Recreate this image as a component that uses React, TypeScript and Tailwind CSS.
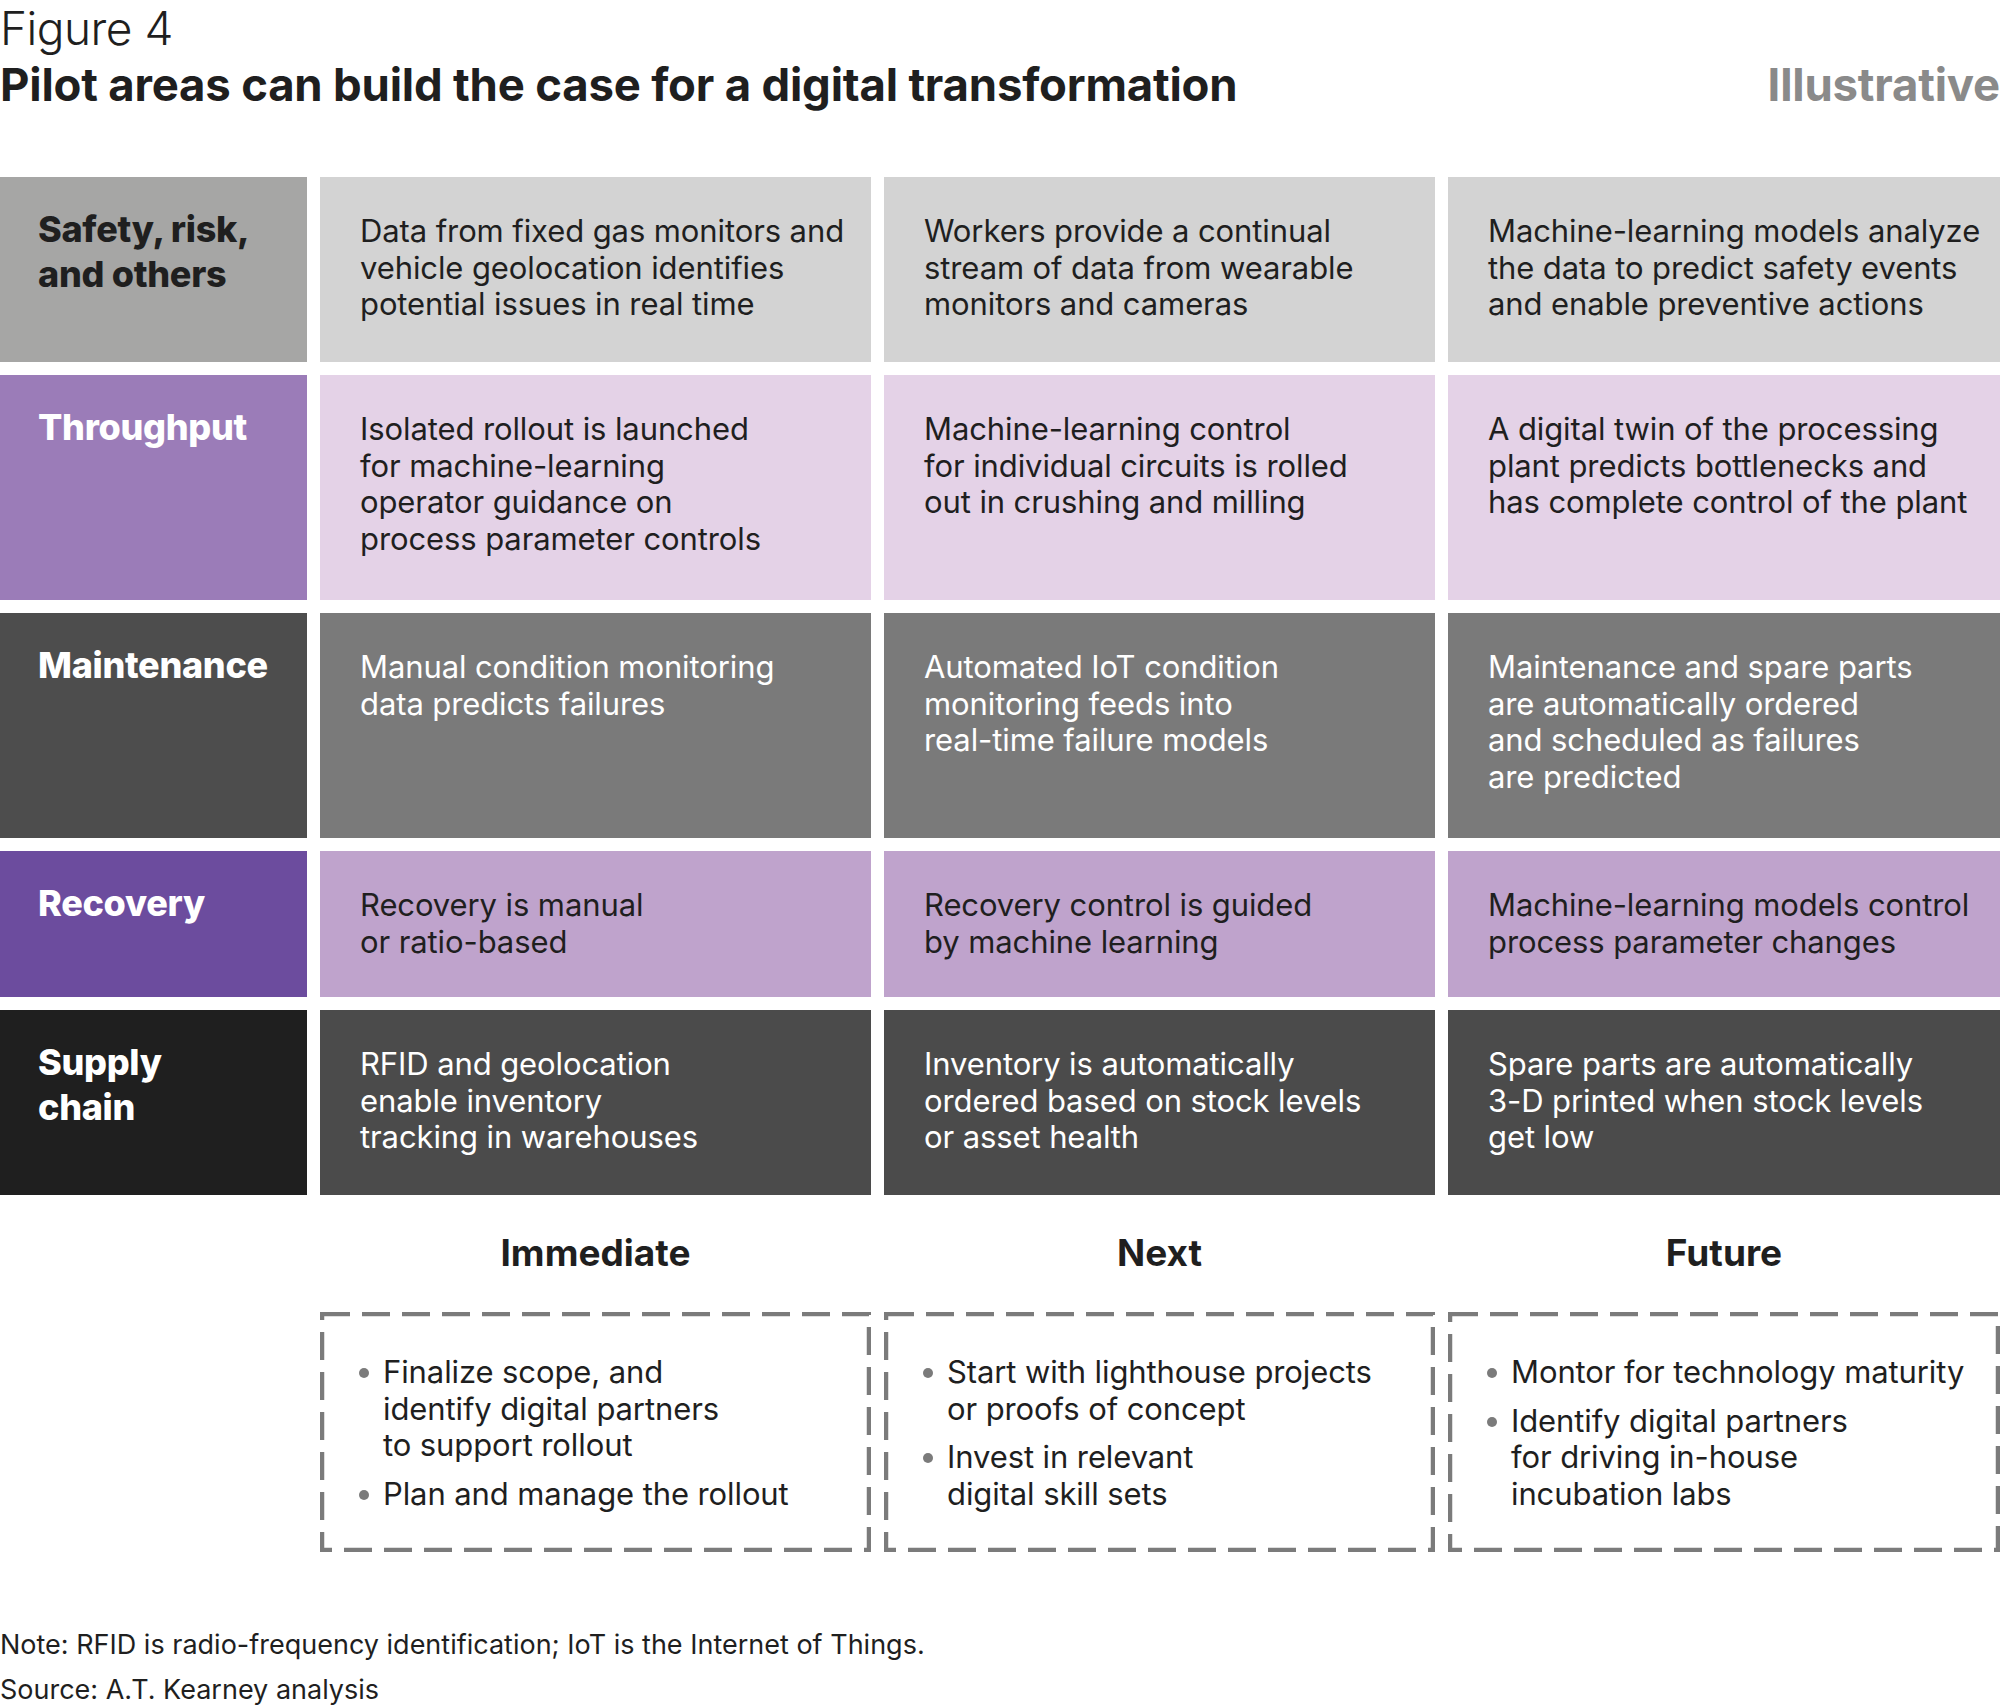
import React from 'react';

type Row = {
  label: string[];
  labelBg: string;
  labelText: string;
  cellBg: string;
  cellText: string;
  height: string;
  cells: string[][];
};

const rows: Row[] = [
  {
    label: ['Safety, risk,', 'and others'],
    labelBg: 'bg-[#a6a6a5]',
    labelText: 'text-[#1f1f1f]',
    cellBg: 'bg-[#d3d3d3]',
    cellText: 'text-[#1f1f1f]',
    height: 'h-[185px]',
    cells: [
      ['Data from fixed gas monitors and', 'vehicle geolocation identifies', 'potential issues in real time'],
      ['Workers provide a continual', 'stream of data from wearable', 'monitors and cameras'],
      ['Machine-learning models analyze', 'the data to predict safety events', 'and enable preventive actions'],
    ],
  },
  {
    label: ['Throughput'],
    labelBg: 'bg-[#9b7cb8]',
    labelText: 'text-white',
    cellBg: 'bg-[#e4d2e7]',
    cellText: 'text-[#1f1f1f]',
    height: 'h-[225px]',
    cells: [
      ['Isolated rollout is launched', 'for machine-learning', 'operator guidance on', 'process parameter controls'],
      ['Machine-learning control', 'for individual circuits is rolled', 'out in crushing and milling'],
      ['A digital twin of the processing', 'plant predicts bottlenecks and', 'has complete control of the plant'],
    ],
  },
  {
    label: ['Maintenance'],
    labelBg: 'bg-[#4d4d4d]',
    labelText: 'text-white',
    cellBg: 'bg-[#7a7a7a]',
    cellText: 'text-white',
    height: 'h-[225px]',
    cells: [
      ['Manual condition monitoring', 'data predicts failures'],
      ['Automated IoT condition', 'monitoring feeds into', 'real-time failure models'],
      ['Maintenance and spare parts', 'are automatically ordered', 'and scheduled as failures', 'are predicted'],
    ],
  },
  {
    label: ['Recovery'],
    labelBg: 'bg-[#6c4c9e]',
    labelText: 'text-white',
    cellBg: 'bg-[#bfa3cc]',
    cellText: 'text-[#1f1f1f]',
    height: 'h-[146px]',
    cells: [
      ['Recovery is manual', 'or ratio-based'],
      ['Recovery control is guided', 'by machine learning'],
      ['Machine-learning models control', 'process parameter changes'],
    ],
  },
  {
    label: ['Supply', 'chain'],
    labelBg: 'bg-[#1f1f1f]',
    labelText: 'text-white',
    cellBg: 'bg-[#4b4b4b]',
    cellText: 'text-white',
    height: 'h-[185px]',
    cells: [
      ['RFID and geolocation', 'enable inventory', 'tracking in warehouses'],
      ['Inventory is automatically', 'ordered based on stock levels', 'or asset health'],
      ['Spare parts are automatically', '3-D printed when stock levels', 'get low'],
    ],
  },
];

const phases: { title: string; bullets: string[][] }[] = [
  {
    title: 'Immediate',
    bullets: [
      ['Finalize scope, and', 'identify digital partners', 'to support rollout'],
      ['Plan and manage the rollout'],
    ],
  },
  {
    title: 'Next',
    bullets: [
      ['Start with lighthouse projects', 'or proofs of concept'],
      ['Invest in relevant', 'digital skill sets'],
    ],
  },
  {
    title: 'Future',
    bullets: [
      ['Montor for technology maturity'],
      ['Identify digital partners', 'for driving in-house', 'incubation labs'],
    ],
  },
];

function Lines({ lines }: { lines: string[] }) {
  return (
    <>
      {lines.map((l, i) => (
        <div key={i}>{l}</div>
      ))}
    </>
  );
}

function DashedBox({ children }: { children: React.ReactNode }) {
  return (
    <div className="relative h-[240px] pl-[63px] pt-[42px]">
      {/* dashed frame */}
      <svg className="absolute inset-0 w-full h-full pointer-events-none" preserveAspectRatio="none">
        <rect
          x="2"
          y="2"
          width="calc(100% - 4px)"
          height="calc(100% - 4px)"
          fill="none"
          stroke="#7b7b7b"
          strokeWidth="4.5"
          strokeDasharray="28 12"
        />
      </svg>
      {children}
    </div>
  );
}

export default function App() {
  return (
    <div className="w-[2000px] h-[1707px] bg-white text-[#1f1f1f] font-['Inter',sans-serif] overflow-hidden">
      {/* Header */}
      <div className="text-[46px] leading-[56px] font-light tracking-[-0.5px]">Figure 4</div>
      <div className="flex items-center justify-between mt-[4px] h-[50px]">
        <h1 className="text-[45.5px] font-bold tracking-[-0.2px] leading-[50px]">
          Pilot areas can build the case for a digital transformation
        </h1>
        <span className="text-[45.5px] font-bold tracking-[-0.2px] leading-[50px] text-[#8a8a8a]">Illustrative</span>
      </div>

      {/* Matrix */}
      <div className="mt-[67px] grid grid-cols-[307px_551px_551px_552px] gap-x-[13px] gap-y-[13px]">
        {rows.map((r, ri) => (
          <React.Fragment key={ri}>
            <div className={`${r.labelBg} ${r.labelText} ${r.height} pl-[38px] pt-[30px] text-[36px] leading-[45px] font-extrabold tracking-[-0.3px]`}>
              <Lines lines={r.label} />
            </div>
            {r.cells.map((c, ci) => (
              <div
                key={ci}
                className={`${r.cellBg} ${r.cellText} ${r.height} pl-[40px] pt-[36px] text-[31px] leading-[36.5px] tracking-[-0.1px]`}
              >
                <Lines lines={c} />
              </div>
            ))}
          </React.Fragment>
        ))}
      </div>

      {/* Phases */}
      <div className="mt-[38px] grid grid-cols-[307px_551px_551px_552px] gap-x-[13px]">
        <div />
        {phases.map((p) => (
          <div key={p.title} className="text-center text-[37px] font-bold leading-[40px]">
            {p.title}
          </div>
        ))}
      </div>
      <div className="mt-[39px] grid grid-cols-[307px_551px_551px_552px] gap-x-[13px]">
        <div />
        {phases.map((p) => (
          <DashedBox key={p.title}>
            <ul className="flex flex-col gap-[12px] text-[31px] leading-[36.5px] tracking-[-0.1px]">
              {p.bullets.map((b, bi) => (
                <li key={bi} className="relative">
                  <span className="absolute left-[-24px] top-[14px] w-[10px] h-[10px] rounded-full bg-[#7b7b7b]" />
                  <Lines lines={b} />
                </li>
              ))}
            </ul>
          </DashedBox>
        ))}
      </div>

      {/* Footnotes */}
      <div className="mt-[70px] text-[27px] leading-[45px] text-[#1f1f1f]">
        <div>Note: RFID is radio-frequency identification; IoT is the Internet of Things.</div>
        <div>Source: A.T. Kearney analysis</div>
      </div>
    </div>
  );
}
